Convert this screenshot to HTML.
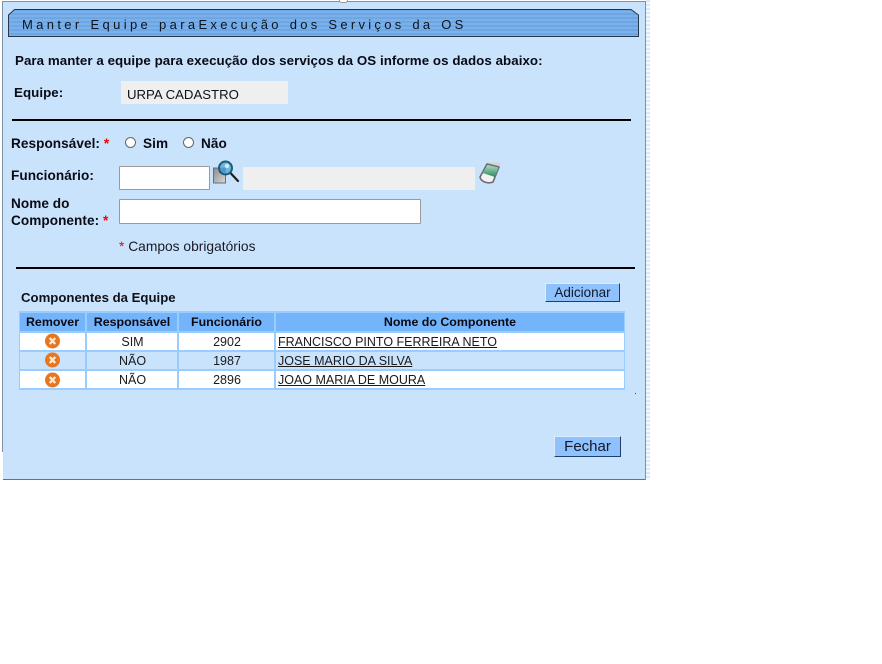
<!DOCTYPE html>
<html><head><meta charset="utf-8"><style>
html,body{margin:0;padding:0;background:#fff}
body{width:882px;height:664px;position:relative;overflow:hidden;font-family:"Liberation Sans",sans-serif;color:#000}
.a{position:absolute;white-space:nowrap}
.b{font-weight:bold;font-size:13.6px;letter-spacing:.05px;line-height:17px;color:#0a0a14}
.r{color:#f00000}
.g{background:#efefef}
.i{background:#fff;border:1px solid #9a9a9a;border-radius:1px;box-sizing:border-box}
.h{position:absolute;height:2px;background:#000}
.radio{position:absolute;width:9px;height:9px;border:1px solid #666;border-radius:50%;background:#fff}
table{position:absolute;left:18px;top:311px;width:608px;height:79px;border-collapse:separate;border-spacing:2px;background:#99ccff;table-layout:fixed;font-size:12.5px;clip-path:inset(0 1px 0 1px)}
td,th{padding:0;text-align:center;color:#1a1a1a;line-height:15px}
td{padding:1px 0 0 1px;box-sizing:border-box}
th{background:#74b4fb;font-size:12.4px;color:#0a0a14}
td.l{text-align:left;padding-left:2px;text-decoration:underline}
tr.w td{background:#fff}
tr.c td{background:#c9e3fd}
.btn{position:absolute;box-sizing:border-box;background:#8fc1fc;border:1px solid;border-color:#dcecff #1e3f6e #1e3f6e #dcecff;color:#10182a;text-align:center;font-size:13.5px}
</style></head><body>
<div class="a" style="left:3px;top:1px;width:642px;height:478px;background:#c9e3fd"></div>
<div class="a" style="left:3px;top:1px;width:642px;height:1px;background:#7f93a8"></div>
<div class="a" style="left:2px;top:1px;width:1px;height:451px;background:#7f93a8"></div>
<div class="a" style="left:3px;top:479px;width:642px;height:1px;background:#5a7594"></div>
<div class="a" style="left:645px;top:1px;width:1px;height:479px;background:#7f93a8"></div>
<div class="a" style="left:646px;top:0;width:4px;height:480px;background:repeating-linear-gradient(#d7e8f8 0 2px,#f4f9fd 2px 4px)"></div>
<div class="a" style="left:339px;top:0;width:9px;height:3px;border-radius:0 0 5px 5px;border:1px solid #999;border-top:0;box-sizing:border-box;background:#fff"></div>

<svg class="a" style="left:8px;top:9px" width="632" height="29">
<defs><pattern id="p" width="4" height="4" patternUnits="userSpaceOnUse"><rect width="4" height="4" fill="#7ab1ea"/><rect width="4" height="2" fill="#6da6e2"/></pattern></defs>
<path d="M.5 27.500V6L6.500 .5H623L630.500 6V27.500Z" fill="url(#p)" stroke="#26374c"/>
</svg>
<div class="a" style="left:22px;top:17px;font-size:13px;line-height:15px;letter-spacing:3.350px;color:#0c1420;word-spacing:1px">Manter Equipe para<span style="letter-spacing:3.280px">Execução dos Serviços da OS</span></div>

<div class="a b" style="left:15px;top:52px;font-size:13.33px">Para manter a equipe para execução dos serviços da OS informe os dados abaixo:</div>
<div class="a b" style="left:14px;top:84px;font-size:13.33px">Equipe:</div>
<div class="a g" style="left:121px;top:81px;width:167px;height:23px"></div>
<div class="a" style="left:127px;top:86px;font-size:13.200px;line-height:17px;color:#101018">URPA CADASTRO</div>
<div class="h" style="left:12px;top:119px;width:619px"></div>

<div class="a b" style="left:11px;top:135px">Responsável: <span class="r">*</span></div>
<div class="radio" style="left:125px;top:137px"></div>
<div class="a b" style="left:143px;top:135px">Sim</div>
<div class="radio" style="left:183px;top:137px"></div>
<div class="a b" style="left:201px;top:135px">Não</div>

<div class="a b" style="left:11px;top:167px">Funcionário:</div>
<div class="a i" style="left:119px;top:166px;width:91px;height:24px"></div>
<svg class="a" style="left:212px;top:160px" width="30" height="26">
<defs><linearGradient id="d" x1="0" y1="0" x2="1" y2="1"><stop offset="0" stop-color="#8a8a8a"/><stop offset="1" stop-color="#d8d8d8"/></linearGradient></defs>
<rect x="1.500" y="8" width="12" height="15" fill="url(#d)" stroke="#6d6d6d"/>
<path d="M7 8h6v5H7z" fill="#2f6298"/>
<line x1="18.500" y1="13" x2="26" y2="21" stroke="#1c1c1c" stroke-width="2.200" stroke-linecap="round"/>
<circle cx="13.500" cy="8" r="6.500" fill="#5aa8d8" fill-opacity=".8" stroke="#1c5c78" stroke-width="2"/>
<circle cx="15" cy="6" r="2.200" fill="#cfeaf8"/>
</svg>
<div class="a g" style="left:243px;top:167px;width:232px;height:23px"></div>
<svg class="a" style="left:478px;top:159px" width="24" height="27">
<defs><linearGradient id="e" x1="0" y1="0" x2="0" y2="1"><stop offset="0" stop-color="#a6dcc0"/><stop offset="1" stop-color="#2f8a60"/></linearGradient></defs>
<path d="M10 3L23 4 21 9 9 7Z" fill="#d4d4d4"/>
<path d="M9 5L21 8 15 23C10 25 3 23 2 18Z" fill="#f2f2f2" stroke="#6a6a6a" stroke-width="1.600" stroke-linejoin="round"/>
<path d="M9.500 6L20.500 8.500 17 18 4.500 14Z" fill="url(#e)"/>
</svg>

<div class="a b" style="left:11px;top:195px;line-height:17px">Nome do<br>Componente: <span class="r">*</span></div>
<div class="a i" style="left:119px;top:199px;width:302px;height:25px"></div>
<div class="a" style="left:119px;top:238px;font-size:13.800px;line-height:17px;color:#1a1a24"><span class="r">*</span> Campos obrigatórios</div>
<div class="h" style="left:16px;top:267px;width:619px"></div>

<div class="a" style="left:21px;top:289px;font-size:13.200px;line-height:17px;font-weight:bold;color:#101018">Componentes da Equipe</div>
<div class="btn" style="left:545px;top:283px;width:75px;height:19px;line-height:17px">Adicionar</div>

<table>
<colgroup><col style="width:65px"><col style="width:90px"><col style="width:95px"><col></colgroup>
<tr style="height:18px"><th>Remover</th><th>Responsável</th><th>Funcionário</th><th>Nome do Componente</th></tr>
<tr class="w"><td></td><td>SIM</td><td>2902</td><td class="l">FRANCISCO PINTO FERREIRA NETO</td></tr>
<tr class="c"><td></td><td>NÃO</td><td>1987</td><td class="l">JOSE MARIO DA SILVA</td></tr>
<tr class="w"><td></td><td>NÃO</td><td>2896</td><td class="l">JOAO MARIA DE MOURA</td></tr>
</table>
<svg class="a" style="left:45px;top:333px" width="16" height="16"><circle cx="7.500" cy="8" r="7.500" fill="#e6761f"/><path d="M4.800 5L10.200 11M10.200 5L4.800 11" stroke="#ffe9d2" stroke-width="2.400"/></svg>
<svg class="a" style="left:45px;top:352px" width="16" height="16"><circle cx="7.500" cy="8" r="7.500" fill="#e6761f"/><path d="M4.800 5L10.200 11M10.200 5L4.800 11" stroke="#ffe9d2" stroke-width="2.400"/></svg>
<svg class="a" style="left:45px;top:372px" width="16" height="16"><circle cx="7.500" cy="8" r="7.500" fill="#e6761f"/><path d="M4.800 5L10.200 11M10.200 5L4.800 11" stroke="#ffe9d2" stroke-width="2.400"/></svg>
<div class="a" style="left:635px;top:393px;width:1px;height:1px;background:#345"></div>

<div class="btn" style="left:554px;top:436px;width:67px;height:21px;line-height:19px;font-size:15px">Fechar</div>
</body></html>
